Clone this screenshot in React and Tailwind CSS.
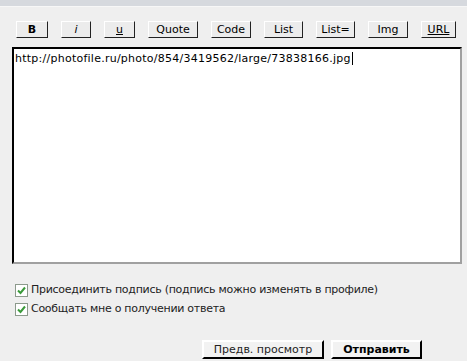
import React from "react";

const tags = [
  { label: "B", cls: "font-bold w-[32px]" },
  { label: "i", cls: "italic w-[30px]" },
  { label: "u", cls: "underline w-[31px]" },
  { label: "Quote", cls: "w-[50px]" },
  { label: "Code", cls: "w-[40px]" },
  { label: "List", cls: "w-[39px]" },
  { label: "List=", cls: "w-[39px]" },
  { label: "Img", cls: "w-[40px]" },
  { label: "URL", cls: "underline w-[35px]" },
];

function TagButton({ label, cls }) {
  return (
    <button
      className={`h-[17px] bg-[#ececec] border border-t-white border-l-white border-b-[#222] border-r-[#222] text-[11px] leading-none text-black ${cls}`}
    >
      {label}
    </button>
  );
}

function Check({ children }) {
  return (
    <label className="flex items-center gap-[3px] h-[19px]">
      <span className="w-[13px] h-[13px] border border-[#8c9a8c] bg-white flex items-center justify-center">
        <svg width="9" height="9" viewBox="0 0 9 9">
          <path d="M1 4.5 L3.5 7 L8 1.5" stroke="#3a9a3a" strokeWidth="2" fill="none" />
        </svg>
      </span>
      <span className="text-[11px] tracking-[-0.27px] text-[#222]">{children}</span>
    </label>
  );
}

export default function App() {
  return (
    <div className="w-[467px] h-[361px] bg-[#efefef] font-['DejaVu_Sans',sans-serif] overflow-hidden">
      <div className="h-[7px] bg-[#d6d9de] border-b border-[#f7f7f7]" />

      {/* bbcode toolbar */}
      <div className="flex gap-[13px] pl-[16px] pt-[14px]">
        {tags.map((t) => (
          <TagButton key={t.label} {...t} />
        ))}
      </div>

      {/* message box */}
      <div className="ml-[12px] mt-[9px] w-[450px] h-[217px] bg-white border-2 border-t-black border-l-black border-b-[#a0a0a0] border-r-[#a0a0a0] px-[1px] pt-[3px] text-[11px] leading-[13px] tracking-[0.25px] text-black">
        http://photofile.ru/photo/854/3419562/large/73838166.jpg
        <span className="inline-block w-px h-[13px] bg-black align-top ml-px" />
      </div>

      <div className="pl-[15px] pt-[17px]">
        <Check>Присоединить подпись (подпись можно изменять в профиле)</Check>
        <Check>Сообщать мне о получении ответа</Check>
      </div>

      <div className="flex justify-end gap-[7px] pr-[45px] pt-[21px]">
        <button className="h-[19px] w-[122px] bg-[#f2f2f2] border-2 border-t-white border-l-white border-b-black border-r-black text-[11px] text-[#222]">
          Предв. просмотр
        </button>
        <button className="h-[19px] w-[91px] bg-[#f2f2f2] border-2 border-t-white border-l-white border-b-black border-r-black text-[11px] font-bold text-black">
          Отправить
        </button>
      </div>
    </div>
  );
}
